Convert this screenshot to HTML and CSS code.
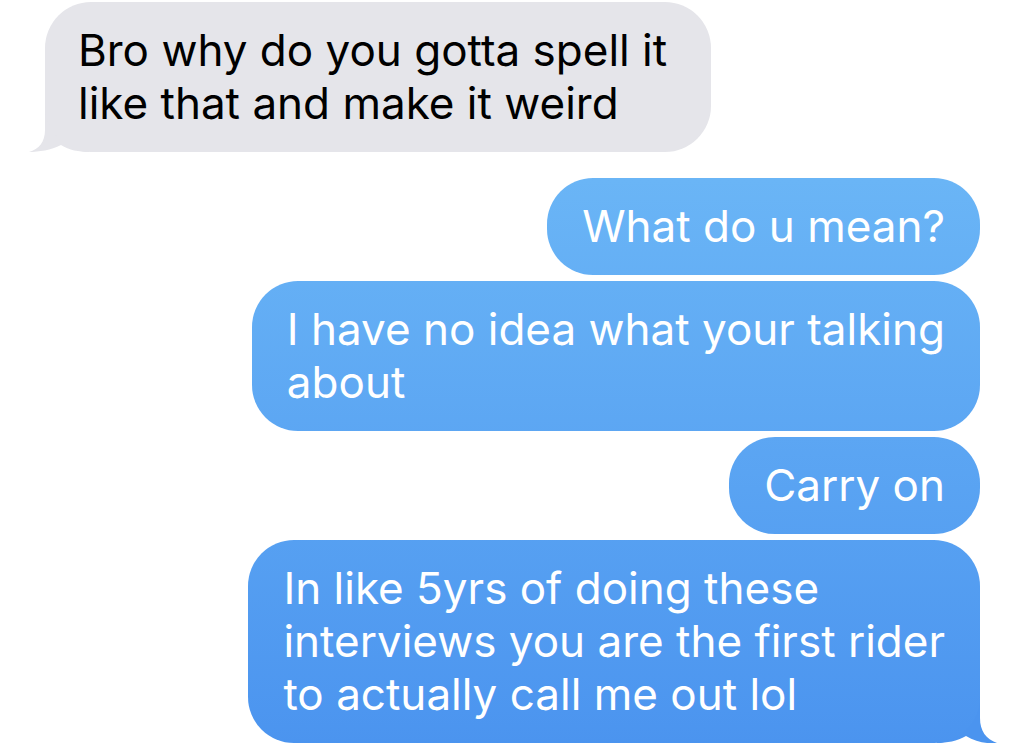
FILE: index.html
```html
<!DOCTYPE html>
<html lang="en">
<head>
<meta charset="UTF-8">
<meta name="viewport" content="width=device-width, initial-scale=1.0">
<title>Messages</title>
<link rel="stylesheet" href="styles.css">
</head>
<body>

<div class="thread">

<div class="bubble received">
Bro why do you gotta spell it<br>like that and make it weird
<svg class="tail tail-left" viewBox="0 0 60 50" width="60" height="50"><path d="M16 0 L16 28 C16 40 10 47 0 50 C10 50 22 48 32 43 C40 48 50 50 60 50 L60 0 Z" fill="#e5e5ea"/></svg>
</div>

<div class="bubble sent first">What do u mean?</div>
<div class="bubble sent">I have no idea what your talking<br>about</div>
<div class="bubble sent">Carry on</div>
<div class="bubble sent">
In like 5yrs of doing these<br>interviews you are the first rider<br>to actually call me out lol
<svg class="tail tail-right" viewBox="0 0 60 50" width="60" height="50"><path d="M43 0 L43 25 C43 38 49 46 60 50 C50 51 39 49 29 43 C20 48 10 50 0 50 L0 0 Z" fill="#4b94ef"/></svg>
</div>

</div>

</body>
</html>
```

FILE: styles.css
```css
body {
margin: 0;
background: #ffffff;
font-family: Inter, "Noto Sans", Arial, sans-serif;
}
.thread {
display: flex;
flex-direction: column;
padding: 2px 44px 0 45px;
}
.bubble {
position: relative;
font-size: 44px;
line-height: 53px;
padding: 22px 35px;
border-radius: 46px;
}
.received {
align-self: flex-start;
background: #e5e5ea;
color: #000000;
padding-left: 33px;
padding-right: 44px;
}
.sent {
align-self: flex-end;
color: #ffffff;
margin-top: 6px;
/* one gradient for the whole screen, like iOS */
background: linear-gradient(to bottom, #72bcf7 0, #6ab5f6 180px, #4b94ef 745px) fixed;
}
.sent.first {
margin-top: 26px;
}
/* tails sit behind the bubble so they never cover text */
.tail {
position: absolute;
bottom: 0;
z-index: -1;
}
.tail-left {
left: -16px;
}
.tail-right {
right: -17px;
}
```
